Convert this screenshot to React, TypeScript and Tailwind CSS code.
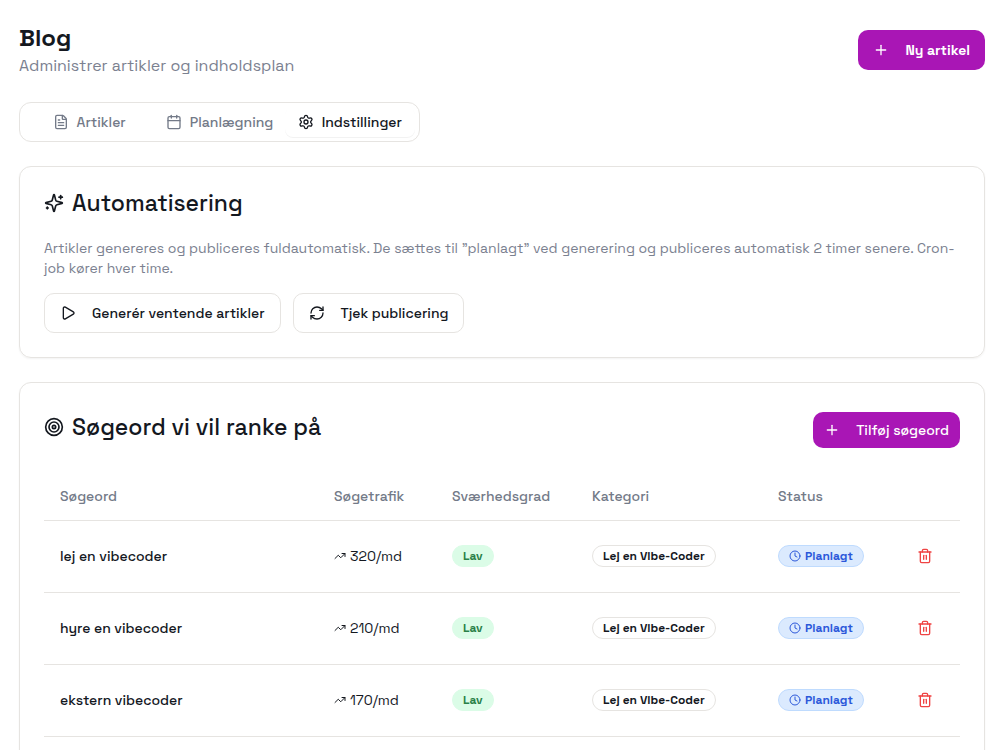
import React from 'react';
import { Calendar, Clock, FileText, Play, Plus, RefreshCw, Settings, Target, Trash2, TrendingUp } from 'lucide-react';

interface Keyword {
  term: string;
  volume: number;
  difficulty: string;
  category: string;
  status: string;
}

const keywords: Keyword[] = [
  { term: 'lej en vibecoder', volume: 320, difficulty: 'Lav', category: 'Lej en Vibe-Coder', status: 'Planlagt' },
  { term: 'hyre en vibecoder', volume: 210, difficulty: 'Lav', category: 'Lej en Vibe-Coder', status: 'Planlagt' },
  { term: 'ekstern vibecoder', volume: 170, difficulty: 'Lav', category: 'Lej en Vibe-Coder', status: 'Planlagt' },
];

const tabs = [
  { label: 'Artikler', icon: FileText },
  { label: 'Planlægning', icon: Calendar },
  { label: 'Indstillinger', icon: Settings },
];

const SparklesIcon: React.FC<{ className?: string }> = ({ className }) => (
  <svg
    viewBox="0 0 24 24"
    fill="none"
    stroke="currentColor"
    strokeWidth="2"
    strokeLinecap="round"
    strokeLinejoin="round"
    className={className}
    aria-hidden="true"
  >
    <path d="M9.937 15.5A2 2 0 0 0 8.5 14.063l-6.135-1.582a.5.5 0 0 1 0-.962L8.5 9.936A2 2 0 0 0 9.937 8.5l1.582-6.135a.5.5 0 0 1 .963 0L14.063 8.5A2 2 0 0 0 15.5 9.937l6.135 1.581a.5.5 0 0 1 0 .964L15.5 14.063a2 2 0 0 0-1.437 1.437l-1.582 6.135a.5.5 0 0 1-.963 0z" />
    <path d="M20 3v4" />
    <path d="M22 5h-4" />
    <path d="M4 17v2" />
    <path d="M5 18H3" />
  </svg>
);

const App: React.FC = () => {
  return (
    <div className="min-h-screen bg-white pl-[19px] pr-[15px] pt-[22px] pb-6 font-['Space_Grotesk','Inter',sans-serif] text-[#14181f]">
      <header className="flex items-center justify-between">
        <div>
          <h1 className="text-2xl leading-8 font-bold">Blog</h1>
          <p className="text-base leading-6 text-[#7b8190]">Administrer artikler og indholdsplan</p>
        </div>
        <button
          type="button"
          className="flex h-10 items-center gap-4 rounded-[10px] bg-[#a916b5] px-[15px] text-sm font-semibold text-white hover:bg-[#95139f]"
        >
          <Plus className="size-4" />
          Ny artikel
        </button>
      </header>

      <div role="tablist" className="mt-6 grid h-10 w-[401px] grid-cols-3 rounded-xl border border-[#e6e4e1] p-1">
        {tabs.map(({ label, icon: Icon }, index) => (
          <button
            key={label}
            type="button"
            role="tab"
            aria-selected={index === 2}
            className={
              index === 2
                ? 'flex items-center justify-center gap-2 rounded-lg bg-white text-sm font-medium shadow-2xs'
                : 'flex items-center justify-center gap-2 rounded-lg text-sm font-medium text-[#737a88]'
            }
          >
            <Icon className="size-4" />
            {label}
          </button>
        ))}
      </div>

      <section className="mt-6 rounded-xl border border-[#e6e4e1] p-6 shadow-xs">
        <h2 className="flex items-center gap-2 text-[23px] leading-6 font-medium">
          <SparklesIcon className="size-5" />
          Automatisering
        </h2>
        <p className="mt-[23px] text-sm leading-5 text-[#7b8190]">
          Artikler genereres og publiceres fuldautomatisk. De sættes til "planlagt" ved generering og publiceres
          automatisk 2 timer senere. Cron-job kører hver time.
        </p>
        <div className="mt-[15px] flex gap-3">
          <button
            type="button"
            className="flex h-10 items-center gap-4 rounded-[10px] border border-[#e6e4e1] px-[15px] text-sm font-medium hover:bg-gray-50"
          >
            <Play className="size-4" />
            Generér ventende artikler
          </button>
          <button
            type="button"
            className="flex h-10 items-center gap-4 rounded-[10px] border border-[#e6e4e1] px-[15px] text-sm font-medium hover:bg-gray-50"
          >
            <RefreshCw className="size-4" />
            Tjek publicering
          </button>
        </div>
      </section>

      <section className="mt-6 rounded-xl border border-[#e6e4e1] px-6 pt-[29px] pb-6 shadow-xs">
        <div className="flex items-start justify-between">
          <h2 className="flex items-center gap-2 text-[23px] leading-[30px] font-medium">
            <Target className="size-5" />
            Søgeord vi vil ranke på
          </h2>
          <button
            type="button"
            className="flex h-9 items-center gap-4 rounded-[10px] bg-[#a916b5] px-[11px] text-sm font-medium text-white hover:bg-[#95139f]"
          >
            <Plus className="size-4" />
            Tilføj søgeord
          </button>
        </div>

        <table className="mt-6 w-full table-fixed text-left text-sm">
          <thead>
            <tr className="h-12 border-b border-[#e6e4e1] text-[#737a88]">
              <th className="px-4 font-medium">Søgeord</th>
              <th className="w-[118px] px-4 font-medium">Søgetrafik</th>
              <th className="w-[140px] px-4 font-medium">Sværhedsgrad</th>
              <th className="w-[186px] px-4 font-medium">Kategori</th>
              <th className="w-[140px] px-4 font-medium">Status</th>
              <th className="w-[58px]"></th>
            </tr>
          </thead>
          <tbody>
            {keywords.map((keyword) => (
              <tr key={keyword.term} className="h-[72px] border-b border-[#e6e4e1]">
                <td className="px-4 font-medium">{keyword.term}</td>
                <td className="px-4">
                  <span className="flex items-center gap-1">
                    <TrendingUp className="size-3" />
                    {keyword.volume}/md
                  </span>
                </td>
                <td className="px-4">
                  <span className="inline-flex h-[22px] items-center rounded-full border border-green-100 bg-green-100 px-2.5 text-xs font-semibold text-[#2a8048]">
                    {keyword.difficulty}
                  </span>
                </td>
                <td className="px-4">
                  <span className="inline-flex h-[22px] items-center rounded-full border border-[#e6e4e1] px-2.5 text-xs font-semibold whitespace-nowrap">
                    {keyword.category}
                  </span>
                </td>
                <td className="px-4">
                  <span className="inline-flex h-[22px] items-center gap-1 rounded-full border border-[#bfdbfe] bg-blue-100 px-2.5 text-xs font-semibold text-[#2c58da]">
                    <Clock className="size-3" />
                    {keyword.status}
                  </span>
                </td>
                <td>
                  <button type="button" aria-label="Slet" className="flex h-10 w-[46px] items-center justify-center text-[#ef4444]">
                    <Trash2 className="size-4" />
                  </button>
                </td>
              </tr>
            ))}
          </tbody>
        </table>
      </section>
    </div>
  );
};

export default App;
